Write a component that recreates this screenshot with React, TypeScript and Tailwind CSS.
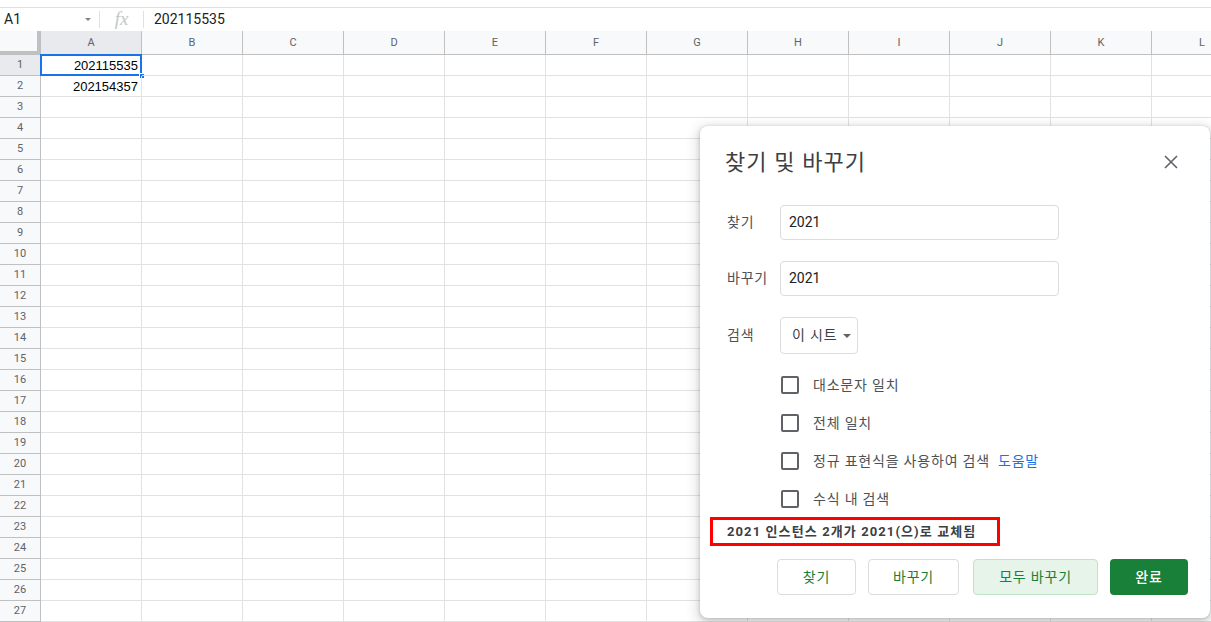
import React from 'react';

const cols = ['A', 'B', 'C', 'D', 'E', 'F', 'G', 'H', 'I', 'J', 'K', 'L'];
const rows = Array.from({ length: 27 }, (_, i) => i + 1);

const cellValues: Record<string, string> = {
  A1: '202115535',
  A2: '202154357',
};

const options = [
  { label: '대소문자 일치' },
  { label: '전체 일치' },
  { label: '정규 표현식을 사용하여 검색', link: '도움말' },
  { label: '수식 내 검색' },
];

function FormulaBar() {
  return (
    <div className="mt-[7px] h-[24px] flex items-center border-t border-[#e0e0e0] text-[14px] text-[#202124]">
      <div className="w-[99px] h-full flex items-center pl-[4px] pr-[8px] justify-between">
        <span>A1</span>
        <span className="w-0 h-0 border-l-[3px] border-r-[3px] border-t-[3px] border-l-transparent border-r-transparent border-t-[#80868b]" />
      </div>
      <div className="w-px h-[17px] bg-[#e0e0e0]" />
      <div className="w-[43px] flex items-center justify-center text-[#c4c7c5] italic text-[19px] [font-family:'Liberation_Serif',serif]">
        fx
      </div>
      <div className="w-px h-[17px] bg-[#e0e0e0]" />
      <span className="pl-[10px]">202115535</span>
    </div>
  );
}

function Grid() {
  return (
    <div className="grid grid-cols-[41px_repeat(12,101px)] auto-rows-[21px] grid-rows-[24px] [font-family:'Liberation_Sans',Arial,sans-serif]">
      <div className="bg-[#f8f9fa] border-r-4 border-b-4 border-[#c0c0c0]" />
      {cols.map((c) => (
        <div
          key={c}
          className={`flex items-center justify-center pt-[2px] text-[11px] text-[#5f6368] border-r border-b border-[#c0c0c0] [font-family:Roboto,sans-serif] ${
            c === 'A' ? 'bg-[#e8eaed]' : 'bg-[#f8f9fa]'
          }`}
        >
          {c}
        </div>
      ))}
      {rows.map((r) => (
        <React.Fragment key={r}>
          <div
            className={`flex items-center justify-center text-[11px] text-[#5f6368] border-r border-b border-[#c0c0c0] [font-family:Roboto,sans-serif] ${
              r === 1 ? 'bg-[#e8eaed]' : 'bg-[#f8f9fa]'
            }`}
          >
            {r}
          </div>
          {cols.map((c) => {
            const key = `${c}${r}`;
            const selected = key === 'A1';
            return (
              <div
                key={key}
                className="relative flex items-center justify-end pr-[3px] pt-[2px] text-[13px] text-black border-r border-b border-[#e2e2e2]"
              >
                {cellValues[key]}
                {selected && (
                  <>
                    <div className="absolute -left-px -top-px -right-px -bottom-px border-2 border-[#1a73e8]" />
                    <div className="absolute -right-[4px] -bottom-[4px] w-[6px] h-[6px] bg-[#1a73e8] border border-white" />
                  </>
                )}
              </div>
            );
          })}
        </React.Fragment>
      ))}
    </div>
  );
}

function TextField({ value }: { value: string }) {
  return (
    <div className="w-[279px] h-[35px] border border-[#dadce0] rounded-[4px] flex items-center pl-[8px] text-[14px] text-[#202124]">
      {value}
    </div>
  );
}

function Dialog() {
  return (
    <div className="absolute left-[700px] top-[126px] w-[510px] h-[492px] bg-white rounded-[8px] shadow-[0_1px_4px_rgba(60,64,67,0.3),0_4px_12px_4px_rgba(60,64,67,0.15)] flex flex-col pl-[25px] pr-[22px] pt-[22px] text-[#4d5156] [font-family:Roboto,'Noto_Sans_CJK_KR',sans-serif]">
      <div className="h-[28px] flex items-center justify-between">
        <span className="text-[22px] text-[#3c4043] tracking-[1.1px]">찾기 및 바꾸기</span>
        <svg width="14" height="14" viewBox="0 0 14 14" className="mr-[10px]">
          <path d="M1 1L13 13M13 1L1 13" stroke="#5f6368" strokeWidth="1.6" />
        </svg>
      </div>

      <div className="mt-[29px] flex items-center">
        <span className="w-[55px] pl-[2px] text-[14px] tracking-[0.8px]">찾기</span>
        <TextField value="2021" />
      </div>
      <div className="mt-[21px] flex items-center">
        <span className="w-[55px] pl-[2px] text-[14px] tracking-[0.8px]">바꾸기</span>
        <TextField value="2021" />
      </div>
      <div className="mt-[21px] flex items-center">
        <span className="w-[55px] pl-[2px] text-[14px] tracking-[0.8px]">검색</span>
        <div className="w-[78px] h-[37px] border border-[#dadce0] rounded-[4px] flex items-center pl-[11px] gap-[6px] text-[14px] text-[#3c4043] tracking-[0.8px]">
          이 시트
          <span className="w-0 h-0 border-l-[4px] border-r-[4px] border-t-[4px] border-l-transparent border-r-transparent border-t-[#5f6368]" />
        </div>
      </div>

      <div className="mt-[12px] flex flex-col pl-[56px]">
        {options.map((o) => (
          <div key={o.label} className="h-[38px] flex items-center gap-[14px] text-[14px] tracking-[0.8px]">
            <div className="w-[18px] h-[18px] border-2 border-[#5f6368] rounded-[2px]" />
            <span>
              {o.label}
              {o.link && <span className="ml-[8px] text-[#1a73e8]">{o.link}</span>}
            </span>
          </div>
        ))}
      </div>

      <div className="-ml-[15px] -mt-px w-[290px] h-[29px] border-[3px] border-[#ff0000] flex items-center pl-[14px] text-[13px] font-bold text-[#3c4043] tracking-[1.1px]">
        2021 인스턴스 2개가 2021(으)로 교체됨
      </div>

      <div className="mt-[13px] flex justify-end gap-[12px] text-[14px] tracking-[0.8px]">
        <button className="w-[79px] h-[36px] rounded-[4px] border border-[#dadce0] bg-white text-[#188038]">찾기</button>
        <button className="w-[91px] h-[36px] rounded-[4px] border border-[#dadce0] bg-white text-[#188038] mr-[2px]">바꾸기</button>
        <button className="w-[125px] h-[36px] rounded-[4px] border border-[#bfe3c8] bg-[#e6f4ea] text-[#188038]">모두 바꾸기</button>
        <button className="w-[78px] h-[36px] rounded-[4px] bg-[#188038] text-white font-medium">완료</button>
      </div>
    </div>
  );
}

export default function App() {
  return (
    <div className="relative w-[1211px] h-[622px] overflow-hidden bg-white [font-family:Roboto,'Noto_Sans_CJK_KR',sans-serif]">
      <FormulaBar />
      <Grid />
      <Dialog />
    </div>
  );
}
